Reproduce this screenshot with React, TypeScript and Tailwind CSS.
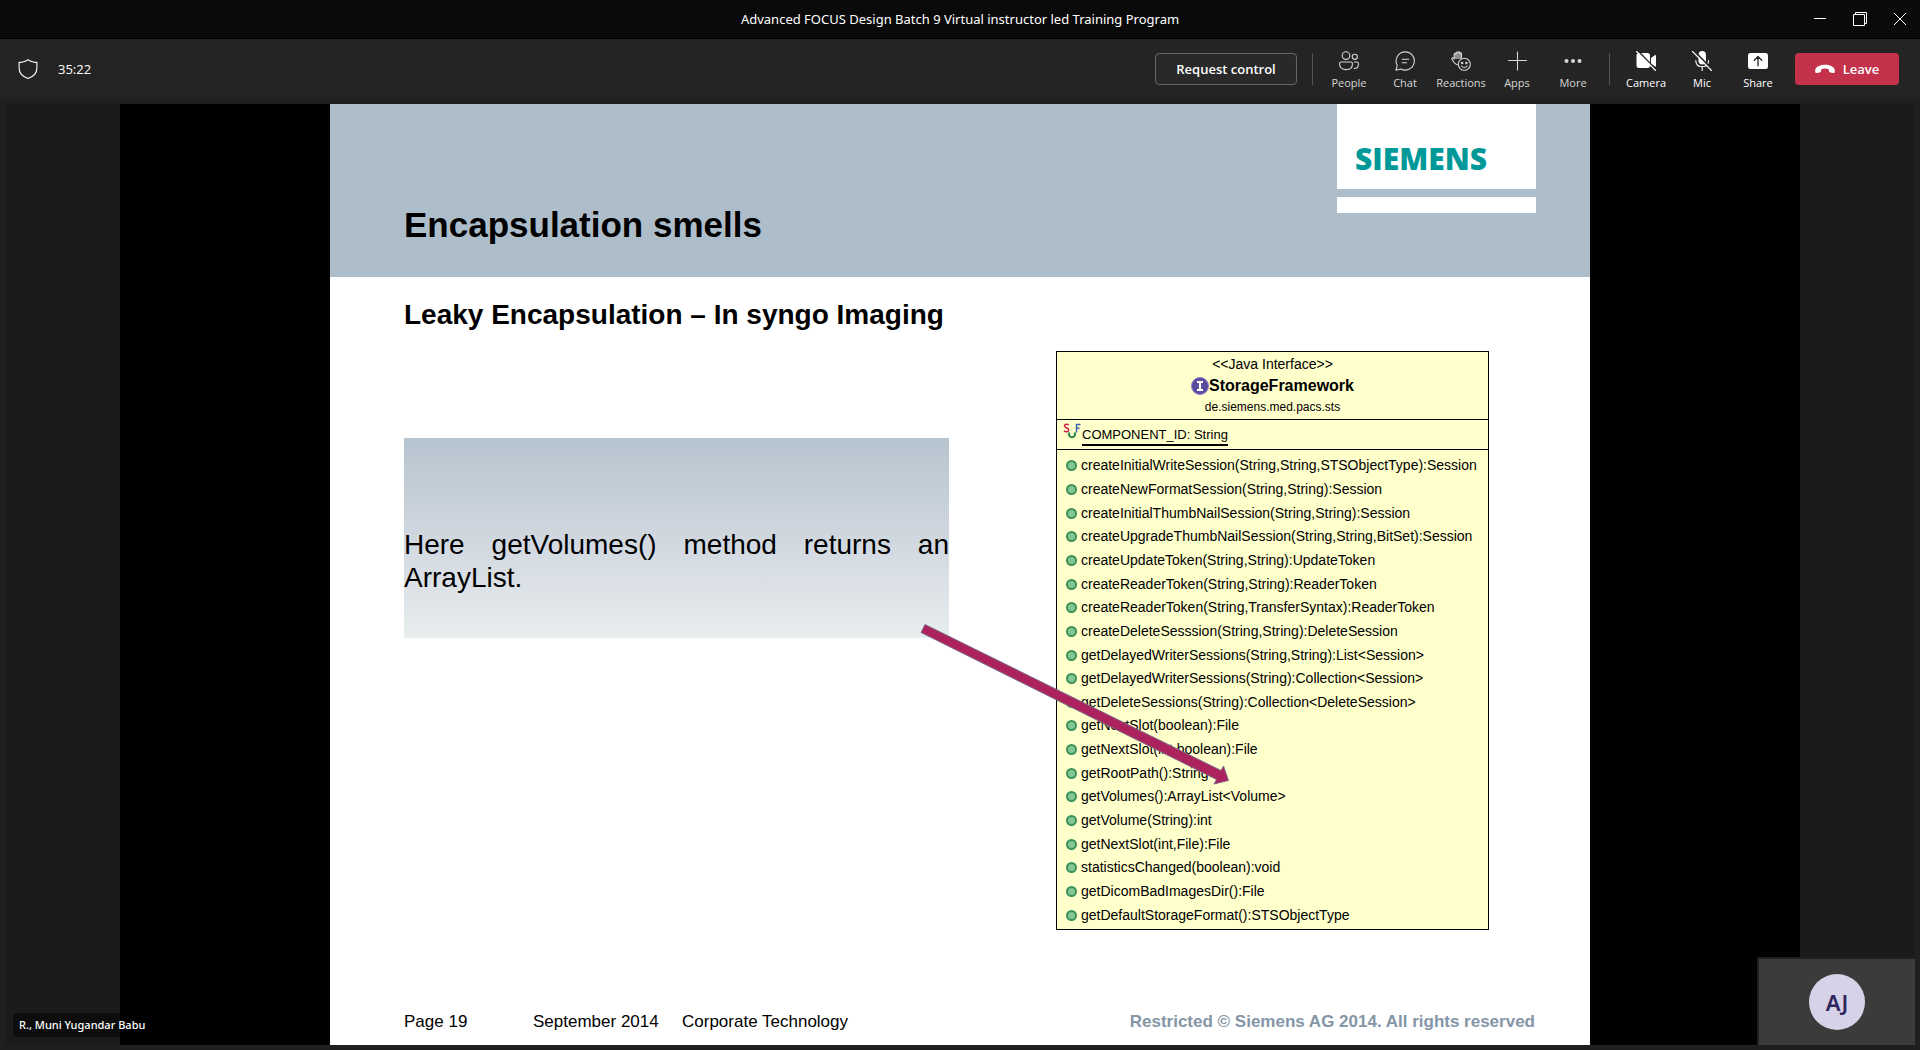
import React from "react";

const uiFont = "font-['Open_Sans','Noto_Sans',sans-serif]";

const methods = [
  "createInitialWriteSession(String,String,STSObjectType):Session",
  "createNewFormatSession(String,String):Session",
  "createInitialThumbNailSession(String,String):Session",
  "createUpgradeThumbNailSession(String,String,BitSet):Session",
  "createUpdateToken(String,String):UpdateToken",
  "createReaderToken(String,String):ReaderToken",
  "createReaderToken(String,TransferSyntax):ReaderToken",
  "createDeleteSesssion(String,String):DeleteSession",
  "getDelayedWriterSessions(String,String):List<Session>",
  "getDelayedWriterSessions(String):Collection<Session>",
  "getDeleteSessions(String):Collection<DeleteSession>",
  "getNextSlot(boolean):File",
  "getNextSlot(int,boolean):File",
  "getRootPath():String",
  "getVolumes():ArrayList<Volume>",
  "getVolume(String):int",
  "getNextSlot(int,File):File",
  "statisticsChanged(boolean):void",
  "getDicomBadImagesDir():File",
  "getDefaultStorageFormat():STSObjectType",
];

function Icon({ children }: { children: React.ReactNode }) {
  return (
    <svg viewBox="0 0 20 20" className="size-5" fill="none" stroke="currentColor" strokeWidth="1.1" strokeLinecap="round" strokeLinejoin="round" aria-hidden="true">
      {children}
    </svg>
  );
}

const PeopleIcon = () => (
  <Icon>
    <circle cx="7" cy="4.6" r="3.8" />
    <circle cx="15.8" cy="5.8" r="2.6" />
    <path d="M2.2 11h9.6c.9 0 1.6.7 1.6 1.6v.6c0 3.4-2.6 5.4-6.4 5.4S.6 16.6.6 13.2v-.6C.6 11.7 1.3 11 2.2 11z" />
    <path d="M15.2 11h2.6c.9 0 1.6.7 1.6 1.6v.6c0 2.6-1.6 4.3-4.2 4.3" />
  </Icon>
);

const ChatIcon = () => (
  <Icon>
    <path d="M10.2.9a9.1 9.1 0 1 1-4.3 17.1L1 19.2l1.2-4.9A9.1 9.1 0 0 1 10.2.9z" />
    <path d="M7.2 8.3h6.6M7.2 11.7h4.4" />
  </Icon>
);

const ReactionsIcon = () => (
  <Icon>
    <path d="M3.2 8V3.2c0-1.3 1.8-1.3 1.8 0V2c0-1.3 1.9-1.3 1.9 0v-.3c0-1.3 1.9-1.3 1.9 0v1.1c0-1.2 1.7-1.2 1.7 0V8z" fill="currentColor" fillOpacity="0.6" stroke="none" />
    <path d="M6.6 13.7C3.8 13.4 2.9 11.9 1 8.3c-.5-1 .8-1.9 1.6-1.1l.6.8V3.2c0-1.3 1.8-1.3 1.8 0V2c0-1.3 1.9-1.3 1.9 0v-.3c0-1.3 1.9-1.3 1.9 0v1.1c0-1.2 1.7-1.2 1.7 0v3.8" />
    <circle cx="13.3" cy="13.3" r="6" />
    <circle cx="11.2" cy="12" r=".7" fill="currentColor" />
    <circle cx="15.4" cy="12" r=".7" fill="currentColor" />
    <path d="M10.5 15c1.3 1.9 4.3 1.9 5.6 0" />
  </Icon>
);

const AppsIcon = () => (
  <Icon>
    <path d="M10.5 1v18M1.5 9.5h18" />
  </Icon>
);

const MoreIcon = () => (
  <Icon>
    <g fill="currentColor" stroke="none">
      <circle cx="3.5" cy="10" r="2" />
      <circle cx="10" cy="10" r="2" />
      <circle cx="16.5" cy="10" r="2" />
    </g>
  </Icon>
);

const CameraOffIcon = () => (
  <Icon>
    <path d="M3 2h8.5A2.5 2.5 0 0 1 14 4.5v10A2.5 2.5 0 0 1 11.5 17H3A2.5 2.5 0 0 1 .5 14.5v-10A2.5 2.5 0 0 1 3 2zM15 7l4.2-3c.4-.3.8 0 .8.4v10.8c0 .5-.4.7-.8.4L15 12.8z" fill="currentColor" stroke="none" />
    <path d="M1.6-.5l19 19.8" stroke="#242424" strokeWidth="1.6" />
    <path d="M.6.5l19 19" />
  </Icon>
);

const MicOffIcon = () => (
  <Icon>
    <rect x="6.5" y="0" width="7.4" height="13.5" rx="3.7" fill="currentColor" stroke="none" />
    <path d="M3.8 9.5c0 3.9 2.5 6.2 6.4 6.2s6.4-2.3 6.4-6.2M10.2 15.7v3.8" />
    <path d="M1.6-.6l19.4 19.8" stroke="#242424" strokeWidth="1.6" />
    <path d="M.5.5l19 19" />
  </Icon>
);

const ShareIcon = () => (
  <Icon>
    <rect x="0" y="2" width="20" height="16" rx="2.5" fill="currentColor" stroke="none" />
    <path d="M10 14.8V5.8M6.3 9.2L10 5.5l3.7 3.7" stroke="#242424" strokeWidth="1.3" />
  </Icon>
);

function Action({ label, icon, strong }: { label: string; icon: React.ReactNode; strong?: boolean }) {
  return (
    <button type="button" className={"flex w-14 flex-col items-center gap-1 pt-1 " + (strong ? "text-white" : "text-[#d6d6d6]")}>
      {icon}
      <span className="text-[11px] leading-4">{label}</span>
    </button>
  );
}

function TitleBar() {
  return (
    <header className="grid h-[39px] grid-cols-[1fr_auto_1fr] items-center border-b border-black bg-[#0a0a0a] text-white">
      <span />
      <h1 className="font-['Noto_Sans',sans-serif] text-[13px] leading-5">Advanced FOCUS Design Batch 9 Virtual instructor led Training Program</h1>
      <div className="flex justify-end">
        <button type="button" aria-label="Minimize" className="grid h-8 w-10 place-items-center">
          <svg viewBox="0 0 14 14" className="size-3.5" stroke="currentColor" aria-hidden="true"><path d="M1 6.5h12" /></svg>
        </button>
        <button type="button" aria-label="Restore" className="grid h-8 w-10 place-items-center">
          <svg viewBox="0 0 14 14" className="size-3.5" fill="none" stroke="currentColor" aria-hidden="true"><path d="M.5 2.5h11v11H.5zM2.5 2.5v-2h11v11h-2" /></svg>
        </button>
        <button type="button" aria-label="Close" className="grid h-8 w-10 place-items-center">
          <svg viewBox="0 0 14 14" className="size-3.5" stroke="currentColor" aria-hidden="true"><path d="M1 1l12 12M13 1L1 13" /></svg>
        </button>
      </div>
    </header>
  );
}

function Toolbar() {
  return (
    <nav className="flex h-[60px] items-center justify-between bg-[#242424] pr-[21px] pl-[18px] text-white">
      <div className="flex items-center gap-5">
        <svg viewBox="0 0 20 20" className="size-5" fill="none" stroke="currentColor" strokeWidth="1.1" strokeLinejoin="round" aria-hidden="true">
          <path d="M10 .6c2 1.7 4.8 2.6 8.9 2.8v5.7c0 5.2-3.2 8.5-8.9 10.4C4.3 17.6 1.1 14.3 1.1 9.1V3.4C5.2 3.2 8 2.3 10 .6z" />
        </svg>
        <time className="text-[13px] leading-5">35:22</time>
      </div>
      <div className="flex items-center gap-2">
        <button type="button" className="mr-[7px] h-8 w-[142px] rounded border border-[#666] bg-[#292929] text-[13px] leading-5 font-semibold">Request control</button>
        <span className="h-8 w-px bg-[#555]" />
        <div className="flex">
          <Action label="People" icon={<PeopleIcon />} />
          <Action label="Chat" icon={<ChatIcon />} />
          <Action label="Reactions" icon={<ReactionsIcon />} />
          <Action label="Apps" icon={<AppsIcon />} />
          <Action label="More" icon={<MoreIcon />} />
        </div>
        <span className="h-8 w-px bg-[#555]" />
        <div className="flex pr-px">
          <Action strong label="Camera" icon={<CameraOffIcon />} />
          <Action strong label="Mic" icon={<MicOffIcon />} />
          <Action strong label="Share" icon={<ShareIcon />} />
        </div>
        <button type="button" className="flex h-8 w-[104px] items-center justify-center gap-2 rounded bg-[#c4314b] text-[13px] leading-5 font-semibold">
          <svg viewBox="0 0 20 10" className="h-2.5 w-5" fill="currentColor" aria-hidden="true">
            <path d="M10 .8c4.5 0 8.3 1.6 9.5 4.3.5 1.2.5 2.5.1 3.3-.3.5-.8.7-1.4.6l-3-.6c-.7-.1-1.1-.6-1.2-1.2l-.3-1.9C12.5 4.8 11.3 4.6 10 4.6s-2.5.2-3.7.7L6 7.2c-.1.6-.5 1.1-1.2 1.2l-3 .6C1.2 9.1.7 8.9.4 8.4 0 7.6 0 6.3.5 5.1 1.7 2.4 5.5.8 10 .8z" />
          </svg>
          Leave
        </button>
      </div>
    </nav>
  );
}

function ClassDiagram() {
  return (
    <div className="w-[433px] border border-black bg-[#ffffcb] text-[14px] text-black">
      <div className="flex h-[68px] flex-col items-center border-b border-black">
        <p className="leading-6">&lt;&lt;Java Interface&gt;&gt;</p>
        <p className="flex items-center text-[16px] leading-5 font-bold">
          <svg viewBox="0 0 18 18" className="size-[18px]" aria-hidden="true">
            <circle cx="9" cy="9" r="8.5" fill="#5a4aa0" stroke="#8d80c4" />
            <path d="M6 5h6M9 5v8M6 13h6" stroke="#fff" strokeWidth="2.2" />
          </svg>
          StorageFramework
        </p>
        <p className="text-[12px] leading-[22px]">de.siemens.med.pacs.sts</p>
      </div>
      <div className="flex h-[30px] gap-px border-b border-black pl-1.5">
        <svg viewBox="0 0 18 18" className="mt-[3px] size-[18px]" fill="none" strokeWidth="1.5" aria-hidden="true">
          <path d="M5.5 2.2C4.5.8 1.5 1 1.5 2.9S5.7 4.8 5.7 6.9 2.3 9.2 1 7.7" stroke="#c8204c" />
          <path d="M13.5 9.5V1.5h4M13.5 5.3h3" stroke="#3f67b0" />
          <path d="M6.500 9.500a3 3 0 1 0 5 0" stroke="#2c8650" strokeWidth="2" />
        </svg>
        <span className="mt-1 h-[22px] border-b-2 border-black text-[13px] leading-[22px]">COMPONENT_ID: String</span>
      </div>
      <ul className="mt-1 mb-0.5 grid h-[473px] auto-rows-fr">
        {methods.map((m) => (
          <li key={m} className="flex items-center gap-1 pl-[9px] whitespace-nowrap">
            <span className="size-[11px] shrink-0 rounded-full border-2 border-[#3b9159] bg-[#83c793]" />
            {m}
          </li>
        ))}
      </ul>
    </div>
  );
}

function Slide() {
  return (
    <article className="relative flex flex-1 flex-col bg-white font-['Liberation_Sans',Arial,sans-serif] text-black">
      <div className="flex h-[173px] justify-between bg-[#adbdca] pr-[54px] pl-[74px]">
        <h2 className="self-end pb-8 text-[35px] leading-10 font-bold">Encapsulation smells</h2>
        <div className="flex w-[199px] flex-col gap-2">
          <div className="flex h-[85px] items-end bg-white pb-3 pl-[18px] font-['Open_Sans',sans-serif] text-[30px] leading-9 font-extrabold text-[#009999]">SIEMENS</div>
          <div className="h-4 bg-white" />
        </div>
      </div>
      <div className="flex flex-1 justify-between pr-[101px] pl-[74px]">
        <section>
          <h3 className="pt-5 text-[28px] leading-9 font-bold">Leaky Encapsulation – In syngo Imaging</h3>
          <div className="mt-[105px] h-[200px] w-[545px] bg-linear-to-b from-[#b6c4cf] via-[#d0d7df] to-[#e8edee] pt-[90px]">
            <p className="text-justify text-[28px] leading-[33px]">Here getVolumes() method returns an ArrayList.</p>
          </div>
        </section>
        <section className="pt-[74px]">
          <ClassDiagram />
        </section>
      </div>
      <svg viewBox="0 0 310 162" className="absolute top-[520px] right-[360px] h-[162px] w-[310px]" aria-hidden="true">
        <path d="M5 .5L301 146.5l2.5-4.5 5 14.5-14.5 3.500 2.500-4.500L1 8.500z" fill="#ab225d" stroke="#7d6c8c" />
      </svg>
      <footer className="flex items-center justify-between pr-[55px] pb-[11px] pl-[74px] text-[17px] leading-6">
        <p className="flex">
          <span className="w-[129px]">Page 19</span>
          <span className="w-[149px]">September 2014</span>
          <span>Corporate Technology</span>
        </p>
        <p className="font-bold text-[#8496a7]">Restricted © Siemens AG 2014. All rights reserved</p>
      </footer>
    </article>
  );
}

export default function App() {
  return (
    <div className={"flex min-h-screen flex-col bg-[#1f1f1f] " + uiFont}>
      <TitleBar />
      <Toolbar />
      <main className="relative m-[5px] flex flex-1 bg-[#1b1b1b] px-[115px]">
        <div className="flex flex-1 bg-black px-[210px]">
          <Slide />
        </div>
        <div className="absolute bottom-2 left-2 rounded bg-black/50 px-1.5 font-['Noto_Sans',sans-serif] text-[11px] leading-6 font-medium text-white">R., Muni Yugandar Babu</div>
        <div className="absolute right-0 bottom-0 grid h-[88px] w-[158px] place-items-center border-t-2 border-l-2 border-[#1f1f1f] bg-[#3b3b3b]">
          <span className="grid size-14 place-items-center rounded-full bg-[#d6d3e8] font-['Noto_Sans',sans-serif] text-[22px] font-semibold text-[#2f2660]">AJ</span>
        </div>
      </main>
    </div>
  );
}
